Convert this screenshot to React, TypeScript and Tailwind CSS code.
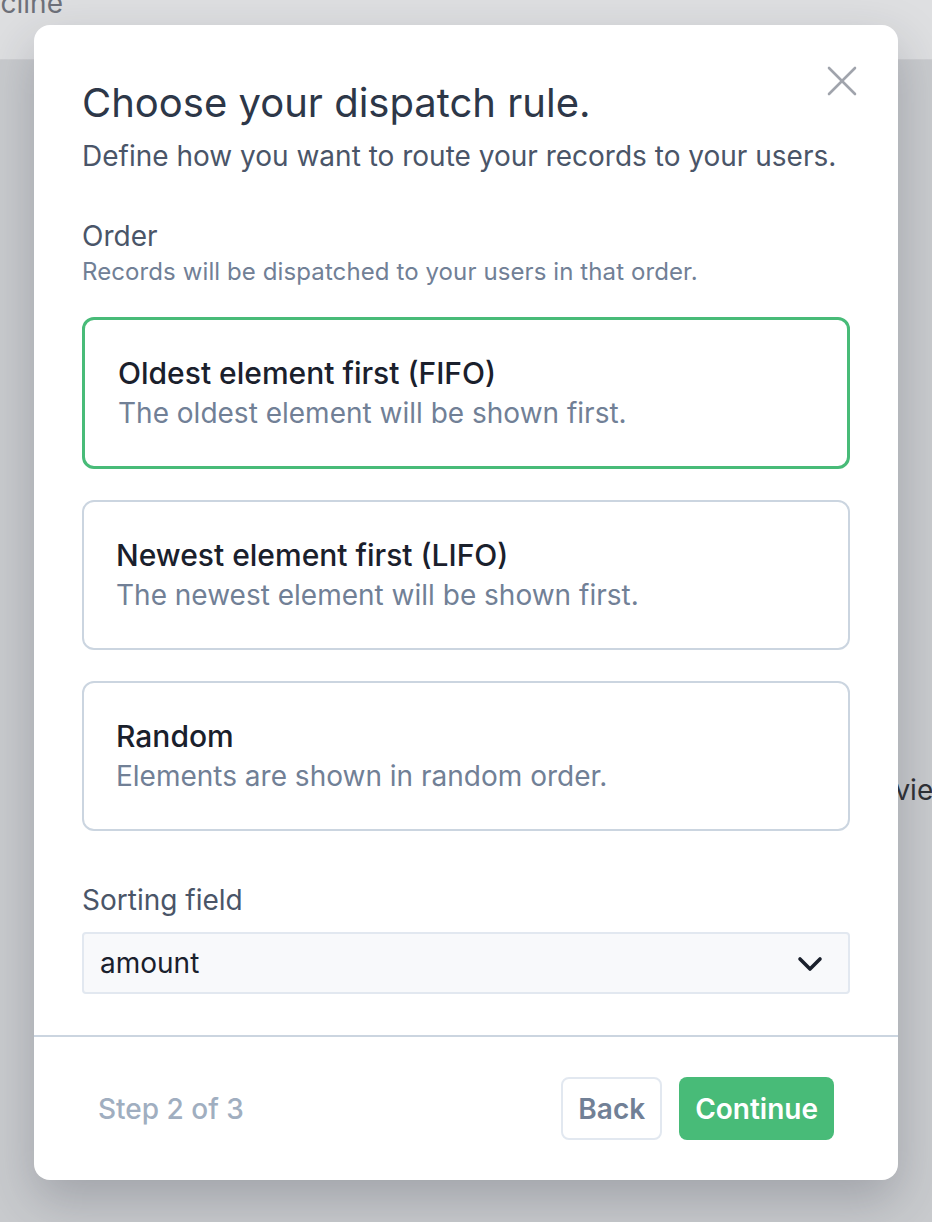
import { useState } from 'react';

const options = [
  { id: 'fifo', title: 'Oldest element first (FIFO)', description: 'The oldest element will be shown first.' },
  { id: 'lifo', title: 'Newest element first (LIFO)', description: 'The newest element will be shown first.' },
  { id: 'random', title: 'Random', description: 'Elements are shown in random order.' },
];

function CloseIcon() {
  return (
    <svg width="30" height="30" viewBox="0 0 30 30" fill="none" stroke="#a0a4ac" strokeWidth="2.6" strokeLinecap="round">
      <path d="M2 2 L28 28" />
      <path d="M28 2 L2 28" />
    </svg>
  );
}

function Chevron() {
  return (
    <svg width="26" height="16" viewBox="0 0 26 16" fill="none" stroke="#1a202c" strokeWidth="3.6" strokeLinecap="round" strokeLinejoin="round">
      <path d="M3 3 L13 13 L23 3" />
    </svg>
  );
}

export default function App() {
  const [selected, setSelected] = useState('fifo');

  return (
    <div
      className="relative h-[1222px] w-full overflow-hidden bg-[#c9cbce]"
      style={{ fontFamily: 'Inter, "Noto Sans", sans-serif' }}
    >
      {/* page behind the overlay */}
      <div className="h-[60px] overflow-hidden border-b border-[#cfd0d3] bg-[#dedfe1]">
        <span className="-ml-[36px] -mt-[17px] block text-[28px] leading-[40px] text-[#6e717a]">Decline</span>
      </div>
      <span className="absolute left-[861px] top-[770px] text-[28px] leading-[40px] text-[#2f3136]">Review</span>

      {/* modal */}
      <div className="absolute left-[34px] top-[25px] w-[864px] rounded-[16px] bg-white shadow-[0_20px_50px_rgba(40,45,60,0.25)]">
        <button type="button" className="absolute right-[41px] top-[41px] block leading-none">
          <CloseIcon />
        </button>

        <div className="px-12 pb-[41px] pt-[50px]">
          <h2 className="text-[40px] font-normal leading-[56px] text-[#2d3748]">Choose your dispatch rule.</h2>
          <p className="mt-[5px] text-[28px] leading-[40px] text-[#4a5568]">
            Define how you want to route your records to your users.
          </p>

          <div className="mt-10">
            <div className="text-[28px] leading-[40px] text-[#4a5568]">Order</div>
            <div className="text-[24px] leading-[32px] tracking-[0.1px] text-[#718096]">
              Records will be dispatched to your users in that order.
            </div>
          </div>

          <div className="mt-[29px] flex flex-col gap-[31px]">
            {options.map((o) => {
              const active = o.id === selected;
              return (
                <button
                  key={o.id}
                  type="button"
                  onClick={() => setSelected(o.id)}
                  className={
                    active
                      ? 'rounded-[12px] border-[3px] border-[#48bb78] px-[33px] py-[33px] text-left'
                      : 'rounded-[12px] border-2 border-[#cbd5e0] px-8 py-[33px] text-left'
                  }
                >
                  <div className="text-[30px] font-medium leading-[40px] text-[#1a202c]">{o.title}</div>
                  <div className="text-[28px] leading-[40px] text-[#718096]">{o.description}</div>
                </button>
              );
            })}
          </div>

          <div className="mt-[49px] text-[28px] leading-[40px] text-[#4a5568]">Sorting field</div>
          <div className="mt-3 flex h-[62px] items-center justify-between rounded-[4px] border-2 border-[#e2e8f0] bg-[#f8f9fb] pl-4 pr-[25px]">
            <span className="text-[28px] leading-[40px] text-[#1a202c]">amount</span>
            <span className="mt-[2px]">
              <Chevron />
            </span>
          </div>
        </div>

        <div className="flex items-center justify-between border-t-2 border-[#cbd5e0] px-16 py-10">
          <span className="text-[28px] font-medium leading-[40px] text-[#a0aec0]">Step 2 of 3</span>
          <div className="flex items-center gap-[17px]">
            <button
              type="button"
              className="h-[63px] rounded-[8px] border-2 border-[#e2e8f0] px-[15px] text-[28px] font-semibold text-[#718096]"
            >
              Back
            </button>
            <button
              type="button"
              className="h-[63px] rounded-[8px] bg-[#48bb78] px-4 text-[28px] font-semibold text-white"
            >
              Continue
            </button>
          </div>
        </div>
      </div>
    </div>
  );
}
